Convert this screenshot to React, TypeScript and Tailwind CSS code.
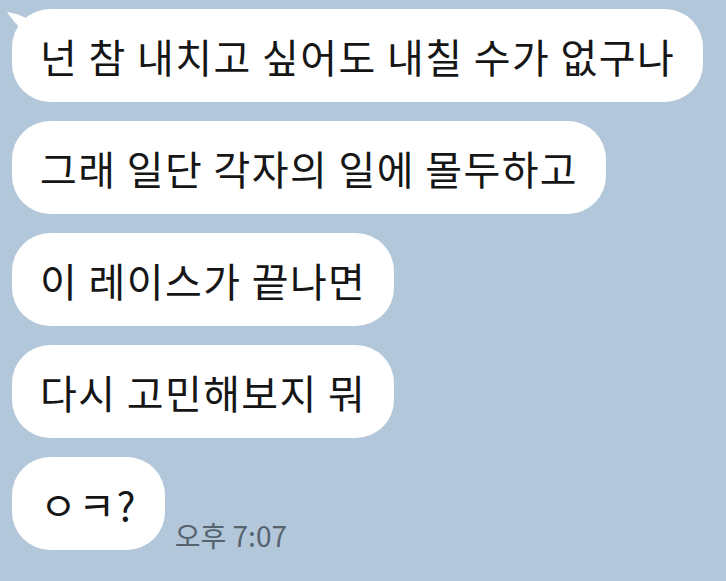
const messages = [
  "넌 참 내치고 싶어도 내칠 수가 없구나",
  "그래 일단 각자의 일에 몰두하고",
  "이 레이스가 끝나면",
  "다시 고민해보지 뭐",
];

const font = { fontFamily: '"Noto Sans CJK KR", "Noto Sans", sans-serif' };

function Bubble({ text, tail }: { text: string; tail?: boolean }) {
  return (
    <div className="relative">
      {tail && (
        <svg
          className="absolute left-[-6px] top-[2px]"
          width="20"
          height="22"
          viewBox="0 0 20 22"
        >
          <path d="M1 1 C8 2 14 4 20 7 L20 22 C12 16 6 8 1 1 Z" fill="#ffffff" />
        </svg>
      )}
      <div className="flex h-[93px] items-center rounded-[38px] bg-white pl-[28px] pr-[28px] text-[40px] leading-none tracking-[1.4px] text-[#161616]">
        {text}
      </div>
    </div>
  );
}

export default function App() {
  return (
    <div
      className="h-[581px] w-[726px] overflow-hidden bg-[#b2c7da] pl-[12px] pt-[9px]"
      style={font}
    >
      <div className="flex flex-col items-start gap-[19px]">
        {messages.map((m, i) => (
          <Bubble key={i} text={m} tail={i === 0} />
        ))}
        <div className="flex items-end gap-[10px]">
          <Bubble text="ㅇㅋ?" />
          <span className="mb-[1px] text-[28px] leading-none text-[#56636f]">
            오후 7:07
          </span>
        </div>
      </div>
    </div>
  );
}
